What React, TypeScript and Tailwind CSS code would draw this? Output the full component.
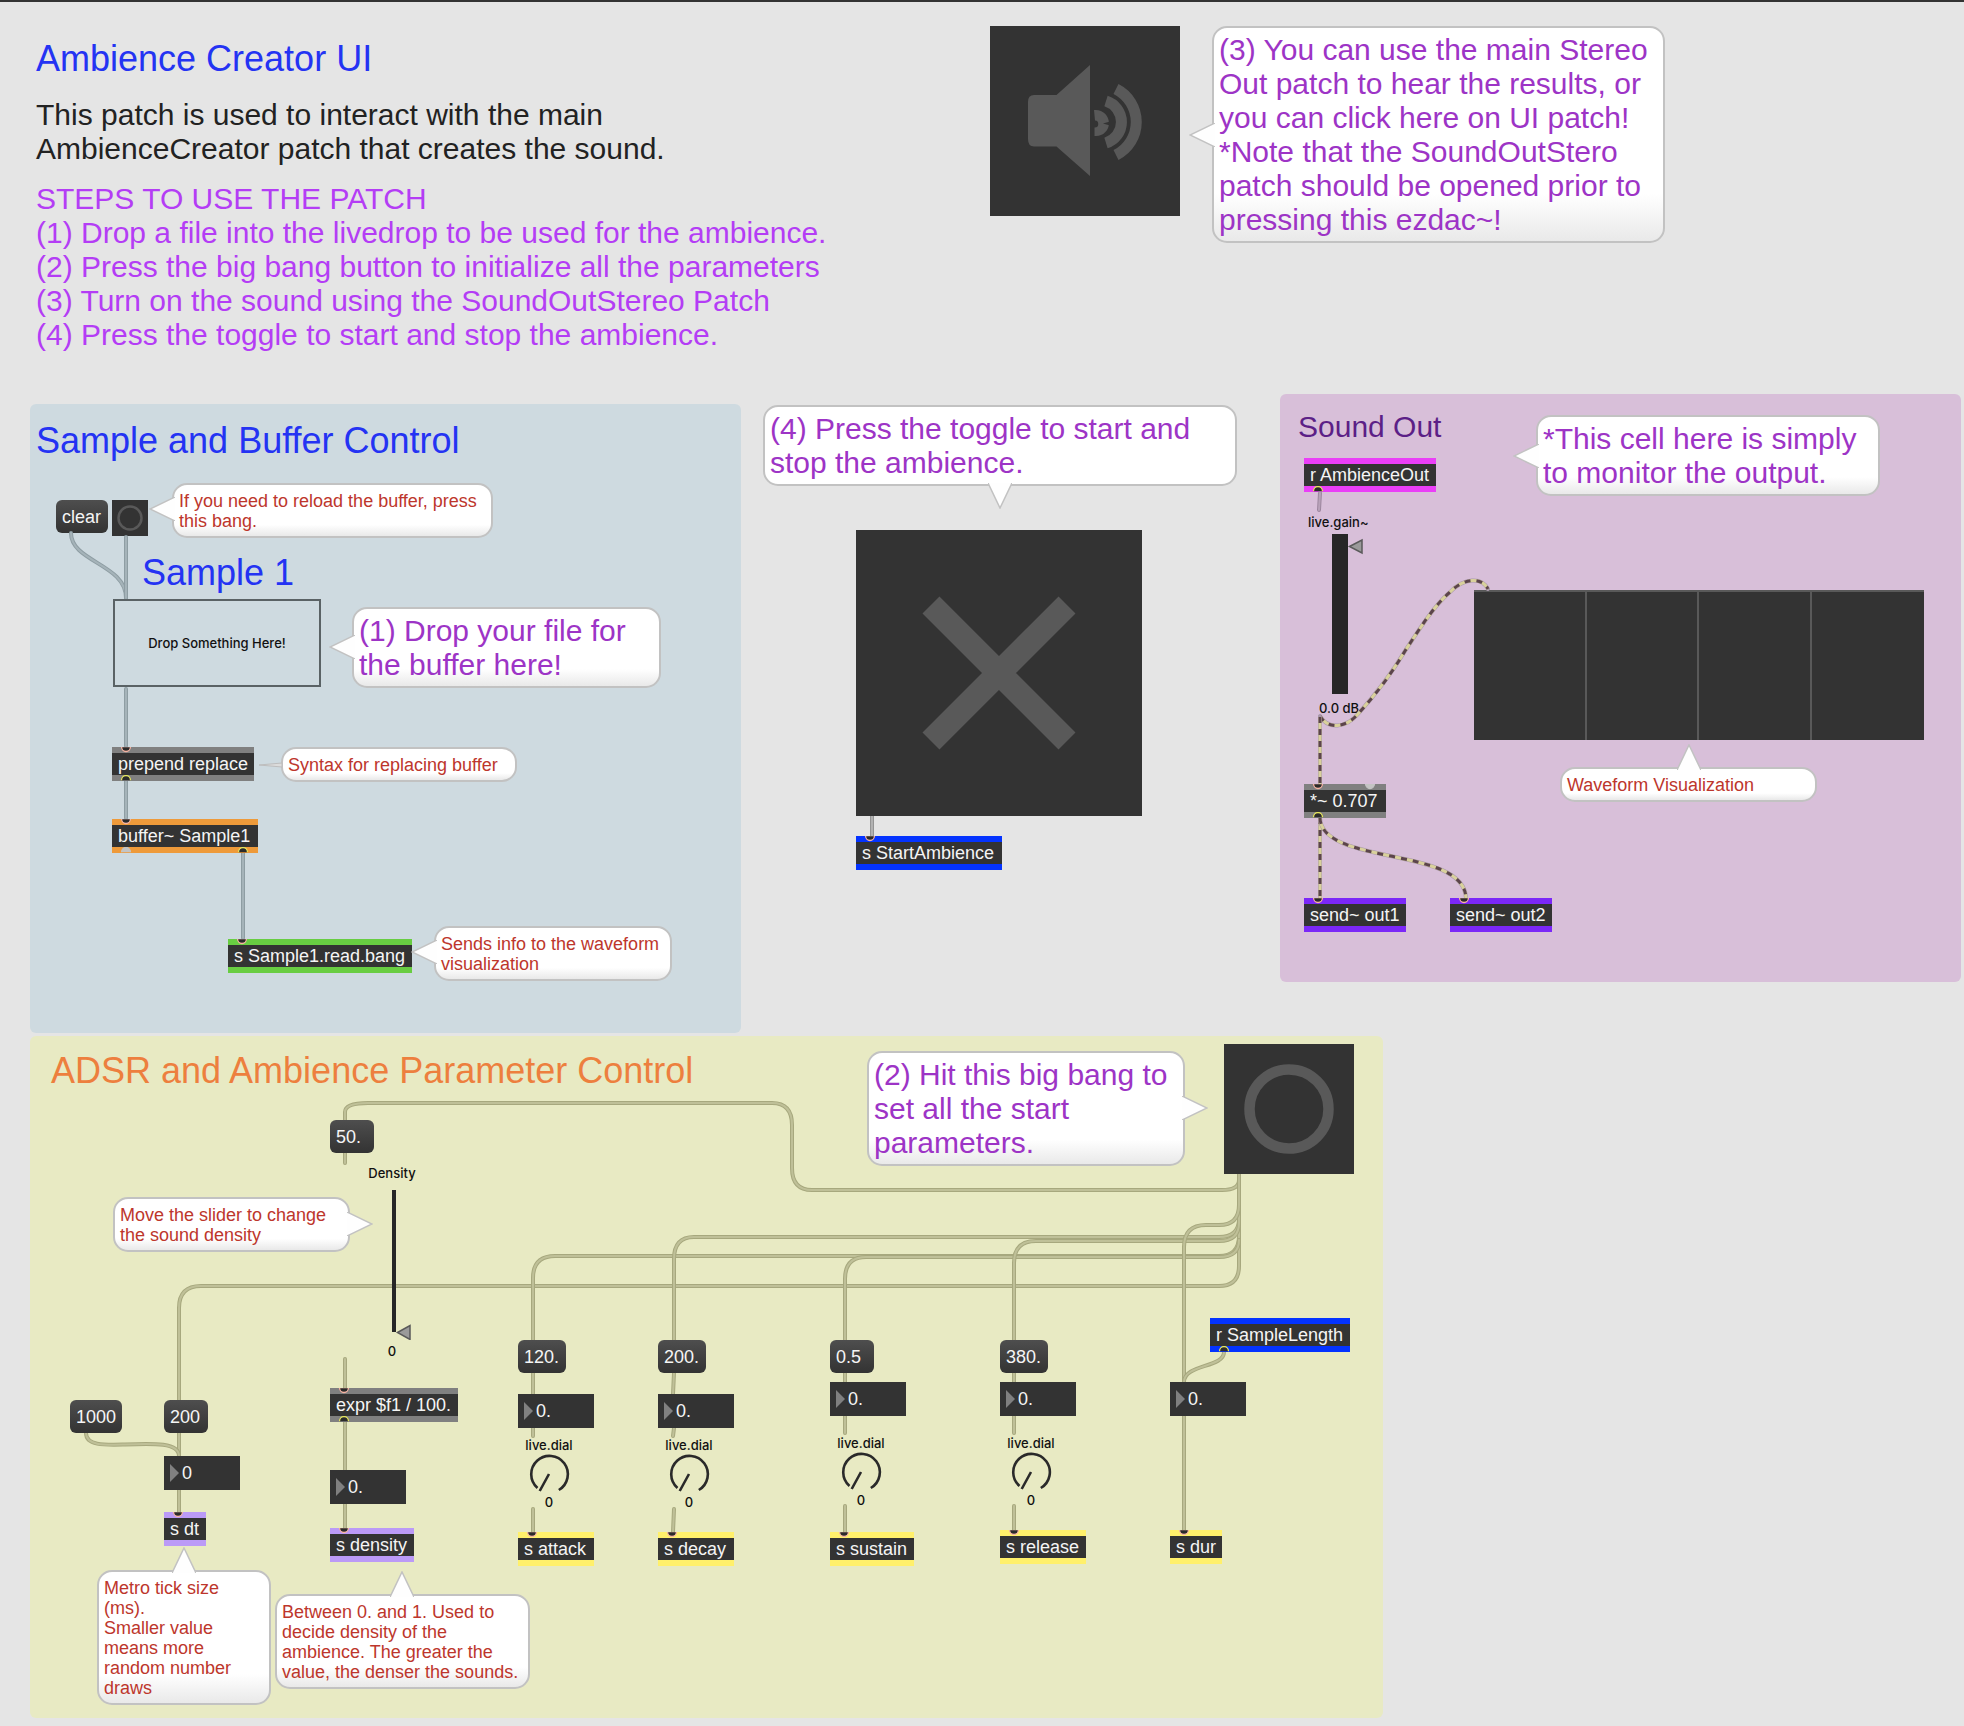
import { useState, type ReactNode } from "react";

const SANS = "font-['Liberation_Sans',Arial,sans-serif]";
const LIVE = "font-['Inter',sans-serif] text-[13px] leading-4 font-medium text-[#111111]";

type TailSide = "left" | "right" | "top" | "bottom";

const TAIL_PLACE: Record<TailSide, string> = {
  left: "-left-[25px] h-6 w-[26px]",
  right: "-right-[25px] h-6 w-[26px]",
  top: "-top-[25px] h-[26px] w-6",
  bottom: "-bottom-[25px] h-[26px] w-6",
};

const TAIL_BOX: Record<TailSide, string> = {
  left: "0 0 26 24",
  right: "0 0 26 24",
  top: "0 0 24 26",
  bottom: "0 0 24 26",
};

const TAIL_POINTS: Record<TailSide, string> = {
  left: "26,0 1,12 26,24",
  right: "0,0 25,12 0,24",
  top: "0,26 12,1 24,26",
  bottom: "0,0 12,25 24,0",
};

function Bubble({
  className,
  tail,
  tailAt,
  thin,
  flat,
  size = "small",
  children,
}: {
  className: string;
  tail: TailSide;
  tailAt: string;
  thin?: boolean;
  flat?: boolean;
  size?: "small" | "large";
  children: string;
}) {
  const text =
    size === "large"
      ? "pt-[5px] pb-1 text-[30px] leading-[34px] text-[#9d34c6]"
      : "pt-1.5 pb-[5px] text-lg leading-5 text-[#bd362c]";
  const fill = flat ? "bg-white" : "bg-linear-to-b from-white from-78% to-[#e9e9e9]";
  return (
    <div className={`${className} shrink-0 rounded-[15px] border-2 border-[#c2c2c2] pl-[5px] ${fill}`}>
      <p className={`whitespace-pre ${text}`}>{children}</p>
      <svg className={`absolute ${TAIL_PLACE[tail]} ${tailAt}`} viewBox={TAIL_BOX[tail]} aria-hidden="true">
        {thin ? (
          <polygon points="24,10 1,12 24,14" fill="#dcdcdc" stroke="#bdbdbd" />
        ) : (
          <polyline points={TAIL_POINTS[tail]} fill="#fefefe" stroke="#c2c2c2" strokeWidth="1.5" />
        )}
      </svg>
    </div>
  );
}

function Inlet({ className = "left-2", idle }: { className?: string; idle?: boolean }) {
  return (
    <svg className={`absolute top-0 h-1.5 w-3 ${className}`} viewBox="0 0 12 6" aria-hidden="true">
      <path d="M1.5 -0.5A4.5 5 0 0 0 10.5 -0.5Z" fill={idle ? "#c4c4c4" : "#2b2b2b"} stroke={idle ? "#c4c4c4" : "#f7b3a2"} strokeWidth="1.3" />
    </svg>
  );
}

function Outlet({ className = "left-2", idle }: { className?: string; idle?: boolean }) {
  return (
    <svg className={`absolute bottom-0 h-1.5 w-3 ${className}`} viewBox="0 0 12 6" aria-hidden="true">
      <path d="M1.5 5.2A4.5 4.7 0 0 1 10.5 5.2" fill={idle ? "#c4c4c4" : "#2b2b2b"} stroke={idle ? "#c4c4c4" : "#e4e45c"} strokeWidth="1.3" />
    </svg>
  );
}

function Obj({
  className,
  inlet,
  outlet,
  extra,
  children,
}: {
  className: string;
  inlet?: boolean;
  outlet?: boolean;
  extra?: ReactNode;
  children: string;
}) {
  return (
    <div className={`shrink-0 py-1.5 ${className}`}>
      <p className="bg-[#333333] pl-1.5 text-lg leading-[22px] whitespace-nowrap text-[#f5f5f5]">{children}</p>
      {inlet && <Inlet />}
      {outlet && <Outlet />}
      {extra}
    </div>
  );
}

function Message({ className, children }: { className: string; children: string }) {
  return (
    <button
      type="button"
      className={`h-[33px] shrink-0 rounded-md bg-linear-to-b from-[#4e4e4e] to-[#333333] pt-px pl-1.5 text-left text-lg leading-8 text-[#f5f5f5] ${className}`}
    >
      {children}
    </button>
  );
}

function NumberBox({ className = "", label, value }: { className?: string; label: string; value: string }) {
  return (
    <label className={`flex h-[34px] w-[76px] items-center gap-[3px] bg-[#333333] pl-1.5 ${className}`}>
      <svg className="h-[18px] w-[9px] shrink-0" viewBox="0 0 9 18" aria-hidden="true">
        <path d="M0 0L9 9L0 18Z" fill="#808080" />
      </svg>
      <input
        type="text"
        aria-label={label}
        defaultValue={value}
        className="w-full min-w-0 bg-transparent text-lg leading-[22px] text-[#f5f5f5] outline-none"
      />
    </label>
  );
}

function Dial({ className = "", label }: { className?: string; label: string }) {
  return (
    <label className={`relative flex w-[62px] flex-col items-center ${LIVE} ${className}`}>
      <span>live.dial</span>
      <svg className="h-[41px] w-[44px]" viewBox="-22 -21 44 41" aria-hidden="true">
        <path d="M-11.5 14A18.3 18.3 0 1 1 9.8 16M0 0L-9.3 17" fill="none" stroke="#2a2a2a" strokeWidth="2.6" />
      </svg>
      <span>0</span>
      <input type="range" aria-label={label} defaultValue={0} className="absolute inset-0 size-full opacity-0" />
    </label>
  );
}

function Channel({
  className,
  start,
  boxGap,
  dialGap,
  sendGap,
  sendWidth,
  name,
}: {
  className: string;
  start: string;
  boxGap: string;
  dialGap: string;
  sendGap: string;
  sendWidth: string;
  name: string;
}) {
  return (
    <div className={`absolute flex flex-col items-start ${className}`}>
      <Message className={start.length > 3 ? "w-12" : "w-11"}>{start}</Message>
      <NumberBox className={boxGap} label={`${name} value`} value="0." />
      <Dial className={dialGap} label={`${name} dial`} />
      <Obj className={`relative bg-[#fff06b] ${sendGap} ${sendWidth}`} inlet>
        {`s ${name}`}
      </Obj>
    </div>
  );
}

function Cord({ d, outer, inner }: { d: string; outer: string; inner: string }) {
  return (
    <>
      <path d={d} stroke={outer} strokeWidth="4" strokeLinecap="round" />
      <path d={d} stroke={inner} strokeWidth="2" strokeLinecap="round" />
    </>
  );
}

function SignalCord({ d }: { d: string }) {
  return (
    <>
      <path d={d} stroke="#a898aa" strokeWidth="4" strokeLinecap="round" />
      <path d={d} stroke="#d9d19b" strokeWidth="3" />
      <path d={d} stroke="#5c444c" strokeWidth="3" strokeDasharray="6 6" />
    </>
  );
}

function Header() {
  const [on, setOn] = useState(false);
  return (
    <header className="grid grid-cols-[954fr_974fr] pl-9">
      <div className="pt-[37px] pb-[42px]">
        <h1 className="text-4xl leading-10 text-[#2433f3]">Ambience Creator UI</h1>
        <p className="mt-[19px] text-[30px] leading-[34px] text-[#222222]">
          This patch is used to interact with the main
          <br />
          AmbienceCreator patch that creates the sound.
        </p>
        <h2 className="mt-4 text-[30px] leading-[34px] text-[#b43df5]">STEPS TO USE THE PATCH</h2>
        <ol className="text-[30px] leading-[34px] whitespace-nowrap text-[#b43df5]">
          <li>(1) Drop a file into the livedrop to be used for the ambience.</li>
          <li>(2) Press the big bang button to initialize all the parameters</li>
          <li>(3) Turn on the sound using the SoundOutStereo Patch</li>
          <li>(4) Press the toggle to start and stop the ambience.</li>
        </ol>
      </div>
      <div className="flex items-start gap-8 pt-6">
        <button
          type="button"
          aria-label="Audio on/off"
          aria-pressed={on}
          onClick={() => setOn(!on)}
          className="size-[190px] shrink-0 bg-[#333333]"
        >
          <svg viewBox="0 0 190 190" aria-hidden="true">
            <path d="M44 69H66.5L100 39V150L66.5 120.5H44Q38 120.5 38 113V76Q38 69 44 69Z" fill="#595959" />
            <path d="M104 84C112 83 119 89 119 97C119 105 112 111 104.5 110V101.5A3.5 3.5 0 0 0 105 94.5Z" fill="#595959" />
            <path d="M116 75A22 22 0 0 1 116 117" fill="none" stroke="#595959" strokeWidth="11" />
            <path d="M126 63A37 37 0 0 1 126 129" fill="none" stroke="#595959" strokeWidth="11" />
            <path d="M113 97.5L120 95.5V99.5Z" fill="#333333" />
          </svg>
        </button>
        <Bubble className="relative w-[453px]" tail="left" tailAt="top-[95px]" size="large">
          {"(3) You can use the main Stereo\nOut patch to hear the results, or\nyou can click here on UI patch!\n*Note that the SoundOutStero\npatch should be opened prior to\npressing this ezdac~!"}
        </Bubble>
      </div>
    </header>
  );
}

function SamplePanel() {
  const cords = [
    "M71 533C71 562 126 564 126 598",
    "M126 537V598",
    "M126 689V746",
    "M126 780V818",
    "M243 852V938",
  ];
  return (
    <section className="relative mt-2.5 h-[629px] rounded-md bg-[#cedae0] pt-[17px]">
      <svg className="absolute top-0 left-0" width="711" height="629" viewBox="30 404 711 629" fill="none" aria-hidden="true">
        {cords.map((d) => (
          <Cord key={d} d={d} outer="#8e9da3" inner="#a5b3b9" />
        ))}
      </svg>
      <h2 className="pl-1.5 text-4xl leading-10 whitespace-nowrap text-[#2433f3]">Sample and Buffer Control</h2>
      <div className="mt-[22px] flex items-start pl-[26px]">
        <Message className="mt-[17px] w-[52px]">clear</Message>
        <button type="button" aria-label="Reload buffer" className="mt-[17px] ml-1 size-9 shrink-0 bg-[#333333]">
          <svg viewBox="0 0 36 36" aria-hidden="true">
            <circle cx="18" cy="18" r="11.5" fill="none" stroke="#595959" strokeWidth="2.5" />
          </svg>
        </button>
        <Bubble className="relative ml-6 w-[321px]" tail="left" tailAt="top-3">
          {"If you need to reload the buffer, press\nthis bang."}
        </Bubble>
      </div>
      <h3 className="mt-[15px] pl-28 text-4xl leading-10 whitespace-nowrap text-[#2433f3]">Sample 1</h3>
      <div className="mt-1.5 flex items-start gap-[31px] pl-[83px]">
        <label className={`relative flex h-[88px] w-52 shrink-0 items-center justify-center border-2 border-[#5a6265] ${LIVE}`}>
          Drop Something Here!
          <input type="file" className="absolute inset-0 size-full opacity-0" />
        </label>
        <Bubble className="relative mt-2 w-[309px]" tail="left" tailAt="top-[26px]" size="large">
          {"(1) Drop your file for\nthe buffer here!"}
        </Bubble>
      </div>
      <div className="mt-[59px] flex items-start gap-[27px] pl-[82px]">
        <Obj className="relative w-[142px] bg-[#808080]" inlet outlet>
          prepend replace
        </Obj>
        <Bubble className="relative w-[236px]" tail="left" tailAt="top-1" thin>
          Syntax for replacing buffer
        </Bubble>
      </div>
      <div className="mt-[37px] pl-[82px]">
        <Obj
          className="relative w-[146px] bg-[#ee9a3a]"
          inlet
          extra={
            <>
              <Outlet idle />
              <Outlet className="left-[125px]" />
            </>
          }
        >
          buffer~ Sample1
        </Obj>
      </div>
      <div className="mt-[73px] flex items-start gap-[22px] pl-[198px]">
        <Obj className="relative mt-[13px] w-[184px] bg-[#68cd42]" inlet>
          s Sample1.read.bang
        </Obj>
        <Bubble className="relative w-[238px]" tail="left" tailAt="top-3">
          {"Sends info to the waveform\nvisualization"}
        </Bubble>
      </div>
    </section>
  );
}

function StartPanel() {
  return (
    <section className="relative flex flex-col items-start pt-[11px]">
      <svg className="absolute top-0 left-0" width="539" height="588" viewBox="741 394 539 588" fill="none" aria-hidden="true">
        <Cord d="M872 816V836" outer="#949494" inner="#b2b2b2" />
      </svg>
      <Bubble className="relative ml-[22px] w-[474px]" tail="bottom" tailAt="left-[223px]" size="large" flat>
        {"(4) Press the toggle to start and\nstop the ambience."}
      </Bubble>
      <label className="relative mt-11 ml-[115px] size-[286px] bg-[#333333]">
        <svg viewBox="0 0 286 286" aria-hidden="true">
          <path d="M75 75L211 211M211 75L75 211" stroke="#595959" strokeWidth="24" />
        </svg>
        <input type="checkbox" aria-label="Start ambience" className="absolute inset-0 size-full opacity-0" />
      </label>
      <Obj className="relative mt-5 ml-[115px] w-[146px] bg-[#0433ff]" inlet>
        s StartAmbience
      </Obj>
    </section>
  );
}

function SoundPanel() {
  return (
    <section className="relative flex h-[588px] items-start self-start rounded-md bg-[#d8bfd9]">
      <div className="flex w-[194px] shrink-0 flex-col items-start pt-4 pl-6">
        <h2 className="-ml-1.5 text-[30px] leading-[34px] whitespace-nowrap text-[#5c1f87]">Sound Out</h2>
        <Obj className="relative mt-3.5 w-[132px] bg-[#ea3ef7]" outlet>
          r AmbienceOut
        </Obj>
        <label className={`relative mt-[22px] ml-1 flex flex-col items-start ${LIVE}`}>
          <span>live.gain~</span>
          <svg className="mt-1 ml-6 h-[160px] w-8" viewBox="0 0 32 160" aria-hidden="true">
            <path d="M0 0H16V160H0Z" fill="#262626" />
            <path d="M17.5 12.5L30 6V19Z" fill="#9a9a9a" stroke="#5a5a5a" strokeWidth="1.5" />
          </svg>
          <span className="mt-1.5 ml-[11px]">0.0 dB</span>
          <input type="range" aria-label="Gain" defaultValue={92} className="absolute inset-0 size-full opacity-0" />
        </label>
        <svg className="absolute top-0 left-0" width="681" height="588" viewBox="1280 394 681 588" fill="none" aria-hidden="true">
          <Cord d="M1320 493L1319 510" outer="#9c869e" inner="#b8a2b9" />
          <SignalCord d="M1320 716C1328 730 1346 728 1358 714C1376 694 1390 676 1405 651C1420 628 1434 606 1449 593C1464 577 1482 577 1488 589" />
          <SignalCord d="M1320 717V784" />
          <SignalCord d="M1320 818V898" />
          <SignalCord d="M1320 818C1322 866 1464 846 1466 898" />
        </svg>
        <Obj className="relative mt-[68px] w-[82px] bg-[#808080]" inlet outlet extra={<Inlet className="left-[60px]" idle />}>
          *~ 0.707
        </Obj>
        <div className="mt-20 flex w-max gap-11">
          <Obj className="relative w-[102px] bg-[#7b27f7]" inlet>
            send~ out1
          </Obj>
          <Obj className="relative w-[102px] bg-[#7b27f7]" inlet>
            send~ out2
          </Obj>
        </div>
      </div>
      <div className="flex flex-col items-start pt-[21px]">
        <Bubble className="relative ml-[62px] w-[344px]" tail="left" tailAt="top-[27px]" size="large">
          {"*This cell here is simply\nto monitor the output."}
        </Bubble>
        <div className="mt-[94px] grid h-[150px] w-[450px] grid-cols-4 divide-x-2 divide-[#595959] border-t-2 border-[#595959] bg-[#333333]">
          <div />
          <div />
          <div />
          <div />
        </div>
        <Bubble className="relative mt-[27px] ml-[86px] w-[257px]" tail="top" tailAt="left-[115px]">
          Waveform Visualization
        </Bubble>
      </div>
    </section>
  );
}

function ParameterPanel() {
  const cords = [
    "M1239 1174V1180Q1239 1190 1222 1190H812Q792 1190 792 1168V1125Q792 1103 772 1103H368Q345 1103 345 1112V1120",
    "M1239 1174V1266Q1239 1286 1219 1286H201Q179 1286 179 1308V1400",
    "M1239 1174V1236Q1239 1256 1219 1256H555Q533 1256 533 1278V1340",
    "M1239 1174V1219Q1239 1237 1219 1237H694Q674 1237 674 1259V1340",
    "M1239 1240Q1239 1257 1219 1257H866Q845 1257 845 1279V1340",
    "M1239 1174V1223Q1239 1241 1219 1241H1036Q1014 1241 1014 1263V1340",
    "M1239 1174V1205Q1239 1225 1219 1225H1206Q1184 1225 1184 1247V1382",
    "M345 1153V1163",
    "M345 1359V1388",
    "M345 1422V1470",
    "M345 1504V1528",
    "M179 1433V1456",
    "M86 1433C86 1446 105 1445 125 1444.5C155 1443 179 1443 179 1456",
    "M179 1490V1512",
    "M533 1373V1394",
    "M533 1428V1436",
    "M533 1509V1532",
    "M674 1373L673 1394",
    "M674 1428L673 1436",
    "M674 1509L673 1532",
    "M845 1373V1382",
    "M845 1416V1433",
    "M845 1506V1532",
    "M1014 1373V1382",
    "M1014 1416V1433",
    "M1014 1506V1530",
    "M1224 1352C1224 1368 1184 1364 1184 1382",
    "M1184 1416V1530",
  ];
  return (
    <section className="relative h-[682px] rounded-md bg-[#e8eac3] pt-[15px]">
      <svg className="absolute top-0 left-0" width="1353" height="682" viewBox="30 1036 1353 682" fill="none" aria-hidden="true">
        {cords.map((d) => (
          <Cord key={d} d={d} outer="#a7a87e" inner="#bfc098" />
        ))}
      </svg>
      <div className="flex items-start">
        <h2 className="w-[837px] shrink-0 pl-[21px] text-4xl leading-10 whitespace-nowrap text-[#ed7f3e]">
          ADSR and Ambience Parameter Control
        </h2>
        <Bubble className="relative w-[318px]" tail="right" tailAt="top-[43px]" size="large">
          {"(2) Hit this big bang to\nset all the start\nparameters."}
        </Bubble>
        <button
          type="button"
          aria-label="Set start parameters"
          className="relative -mt-[7px] ml-[39px] size-[130px] shrink-0 bg-[#333333]"
        >
          <svg viewBox="0 0 130 130" aria-hidden="true">
            <circle cx="65" cy="65" r="39.5" fill="none" stroke="#595959" strokeWidth="10.5" />
          </svg>
        </button>
      </div>

      <div className="absolute top-[84px] left-[300px] flex flex-col items-start">
        <Message className="w-11">50.</Message>
        <label className={`relative mt-3 ml-[31px] flex w-[62px] flex-col items-center ${LIVE}`}>
          <span>Density</span>
          <svg className="mt-[9px] h-[150px] w-[42px]" viewBox="0 0 42 150" aria-hidden="true">
            <path d="M21 0H25V142H21Z" fill="#262626" />
            <path d="M26.5 142.5L39 135.500V149.5Z" fill="#9a9a9a" stroke="#5a5a5a" strokeWidth="1.5" />
          </svg>
          <span className="mt-[3px]">0</span>
          <input type="range" aria-label="Density" defaultValue={0} className="absolute inset-0 size-full opacity-0" />
        </label>
        <Obj className="relative mt-[29px] w-32 bg-[#808080]" inlet outlet>
          expr $f1 / 100.
        </Obj>
        <NumberBox className="mt-12" label="Density value" value="0." />
        <Obj className="relative mt-6 w-[84px] bg-[#bb9af7]" inlet>
          s density
        </Obj>
      </div>
      <Bubble className="absolute top-[161px] left-[83px] w-[237px]" tail="right" tailAt="top-[13px]">
        {"Move the slider to change\nthe sound density"}
      </Bubble>
      <Bubble className="absolute top-[558px] left-[245px] w-[255px]" tail="top" tailAt="left-[113px]">
        {"Between 0. and 1. Used to\ndecide density of the\nambience. The greater the\nvalue, the denser the sounds."}
      </Bubble>

      <Message className="absolute top-[364px] left-10 w-[52px]">1000</Message>
      <div className="absolute top-[364px] left-[134px] flex flex-col items-start">
        <Message className="w-11">200</Message>
        <NumberBox className="mt-[23px]" label="Tick size" value="0" />
        <Obj className="relative mt-[22px] w-[42px] bg-[#bb9af7]" inlet>
          s dt
        </Obj>
      </div>
      <Bubble className="absolute top-[534px] left-[67px] w-[174px]" tail="top" tailAt="left-[73px]">
        {"Metro tick size\n(ms).\nSmaller value\nmeans more\nrandom number\ndraws"}
      </Bubble>

      <Channel className="top-[304px] left-[488px]" start="120." boxGap="mt-[21px]" dialGap="mt-[9px]" sendGap="mt-[22px]" sendWidth="w-[76px]" name="attack" />
      <Channel className="top-[304px] left-[628px]" start="200." boxGap="mt-[21px]" dialGap="mt-[9px]" sendGap="mt-[22px]" sendWidth="w-[76px]" name="decay" />
      <Channel className="top-[304px] left-[800px]" start="0.5" boxGap="mt-[9px]" dialGap="mt-[19px]" sendGap="mt-6" sendWidth="w-[84px]" name="sustain" />
      <Channel className="top-[304px] left-[970px]" start="380." boxGap="mt-[9px]" dialGap="mt-[19px]" sendGap="mt-[22px]" sendWidth="w-[86px]" name="release" />

      <Obj className="absolute top-[282px] left-[1180px] w-[140px] bg-[#0433ff]" outlet>
        r SampleLength
      </Obj>
      <div className="absolute top-[346px] left-[1140px] flex flex-col items-start">
        <NumberBox label="Duration" value="0." />
        <Obj className="relative mt-[114px] w-[52px] bg-[#fff06b]" inlet>
          s dur
        </Obj>
      </div>
    </section>
  );
}

export default function App() {
  return (
    <main className={`min-h-screen border-t-2 border-[#333333] bg-[#e5e5e5] pb-2 ${SANS}`}>
      <Header />
      <div className="grid grid-cols-[711fr_539fr_681fr] pr-[3px] pl-[30px]">
        <SamplePanel />
        <StartPanel />
        <SoundPanel />
      </div>
      <div className="mt-[3px] grid grid-cols-[1353fr_578fr] pr-[3px] pl-[30px]">
        <ParameterPanel />
      </div>
    </main>
  );
}
